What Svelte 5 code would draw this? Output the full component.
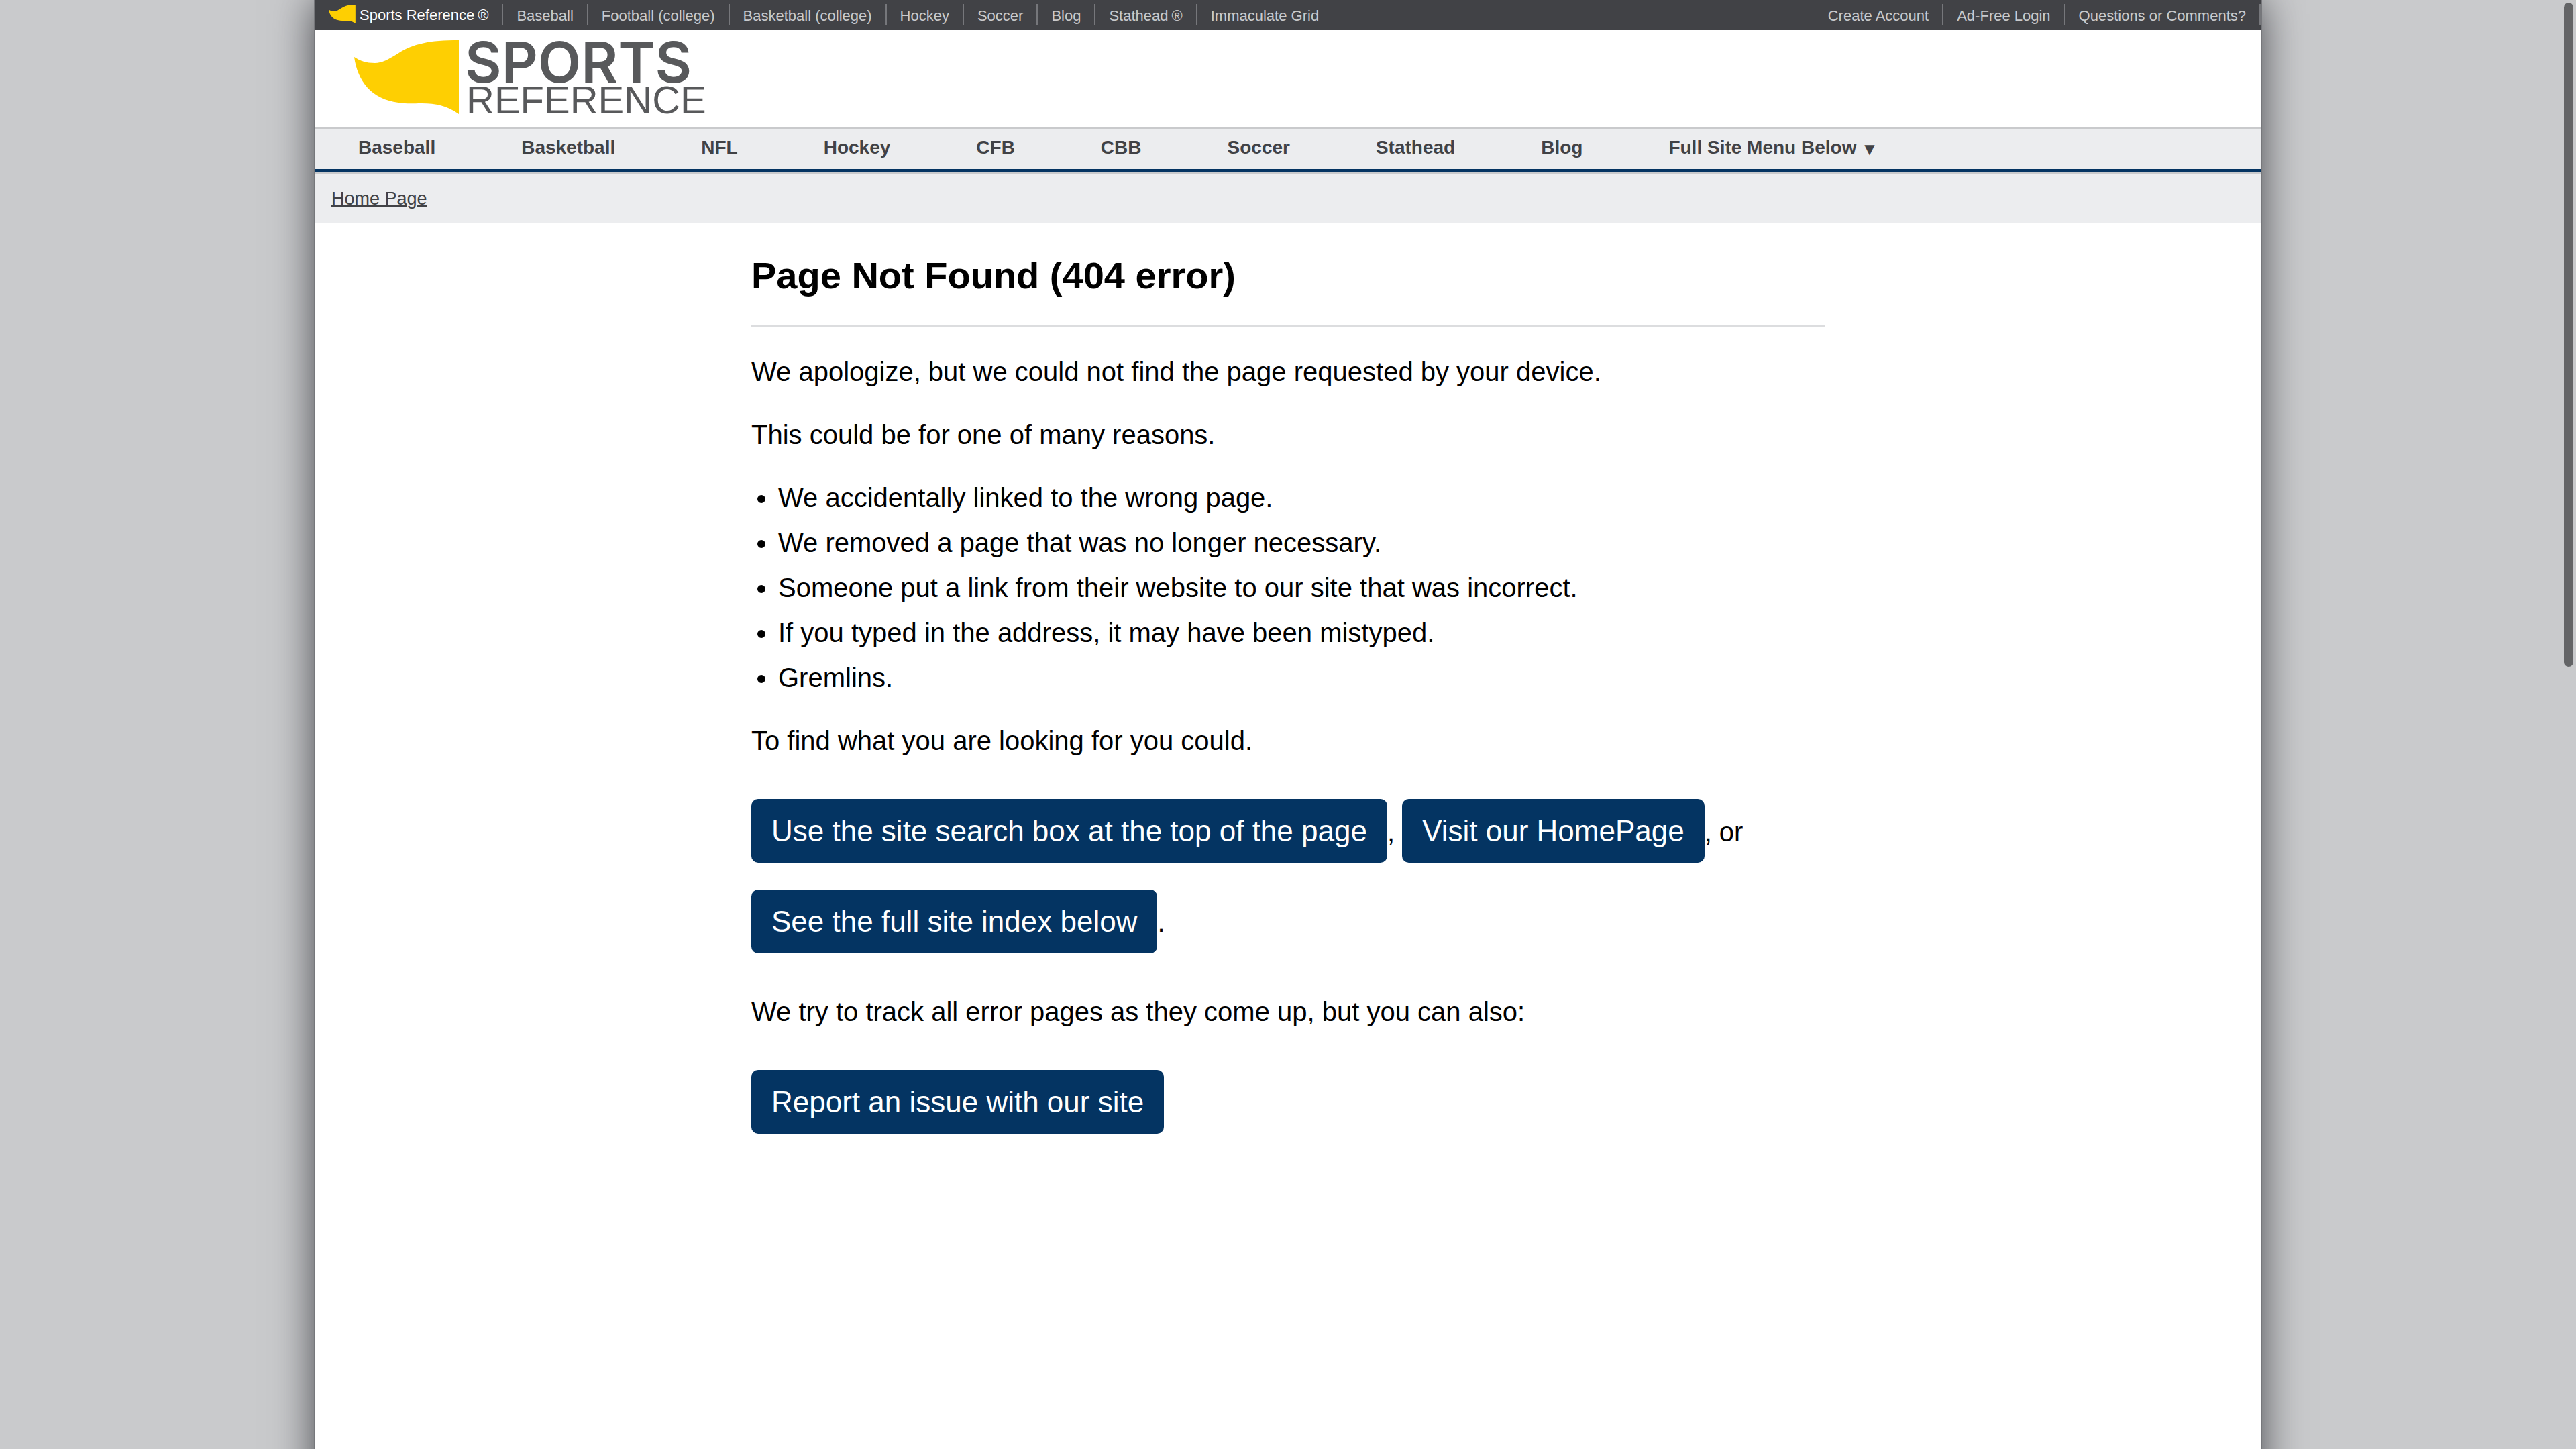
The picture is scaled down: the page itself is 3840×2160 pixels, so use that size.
<script>
  const network = [
    { label: 'Baseball' },
    { label: 'Football (college)' },
    { label: 'Basketball (college)' },
    { label: 'Hockey' },
    { label: 'Soccer' },
    { label: 'Blog' },
    { label: 'Stathead', mark: true },
    { label: 'Immaculate Grid' },
  ];
  const account = ['Create Account', 'Ad-Free Login', 'Questions or Comments?'];
  const sections = ['Baseball', 'Basketball', 'NFL', 'Hockey', 'CFB', 'CBB', 'Soccer', 'Stathead', 'Blog'];
  const reasons = [
    'We accidentally linked to the wrong page.',
    'We removed a page that was no longer necessary.',
    'Someone put a link from their website to our site that was incorrect.',
    'If you typed in the address, it may have been mistyped.',
    'Gremlins.',
  ];
</script>

<div class="viewport">
  <div class="page">
    <nav class="topbar" aria-label="Network">
      <ul>
        <li class="home">
          <a href="#home">
            <svg class="flag-small" viewBox="0 0 156 110" aria-hidden="true">
              <path d="M0 29C9 35 18 38 31 38C69 37 71 0 156 0V110C137 97 122 94 101 94C86 94 81 95 66 93C26 88 5 65 0 29Z" />
            </svg>
            <span>Sports Reference<span class="mark">®</span></span>
          </a>
        </li>
        {#each network as item}
          <li><a href="#network">{item.label}{#if item.mark}<span class="mark">®</span>{/if}</a></li>
        {/each}
      </ul>
      <ul class="account">
        {#each account as item}
          <li><a href="#account">{item}</a></li>
        {/each}
      </ul>
    </nav>

    <header>
      <a class="logo" href="#home" aria-label="Sports Reference">
        <svg viewBox="0 0 560 110">
          <path d="M0 25C9 31 18 34 31 34C41 34 50 29 65 20C88 5 112 0 156 0V110C137 97 122 94 101 94C86 94 81 95 66 93C26 88 5 61 0 25Z" />
          <text class="sports" x="165" y="63">SPORTS</text>
          <text class="reference" x="167" y="109">REFERENCE</text>
        </svg>
      </a>
    </header>

    <nav class="sections" aria-label="Sites">
      <ul>
        {#each sections as item}
          <li><a href="#section">{item}</a></li>
        {/each}
        <li><a href="#footer">Full Site Menu Below <span class="arrow">▼</span></a></li>
      </ul>
    </nav>

    <div class="crumbs"><a href="#home">Home Page</a></div>

    <main>
      <h1>Page Not Found (404 error)</h1>
      <p>We apologize, but we could not find the page requested by your device.</p>
      <p>This could be for one of many reasons.</p>
      <ul>
        {#each reasons as reason}
          <li>{reason}</li>
        {/each}
      </ul>
      <p>To find what you are looking for you could.</p>
      <p>
        <a class="button" href="#search">Use the site search box at the top of the page</a>,
        <a class="button" href="#home">Visit our HomePage</a>, or
        <a class="button" href="#footer">See the full site index below</a>.
      </p>
      <p>We try to track all error pages as they come up, but you can also:</p>
      <p><a class="button" href="#report">Report an issue with our site</a></p>
    </main>
  </div>
  <div class="scroll-thumb"></div>
</div>

<style>
  :global(body) {
    margin: 0;
    background: #c9cacc;
    font-family: 'Liberation Sans', Arial, sans-serif;
  }

  .viewport {
    height: 100vh;
    overflow-x: hidden;
    overflow-y: auto;
    scrollbar-width: none;
  }

  .page {
    box-sizing: border-box;
    max-width: 2900px;
    min-height: calc(100vh + 120px);
    margin: 0 auto;
    background: #fff;
    box-shadow: 0 0 0 2px #76777b, 0 0 60px #414247;
  }

  ul {
    margin: 0;
    padding: 0;
  }

  a {
    color: inherit;
    text-decoration: none;
  }

  .topbar {
    display: flex;
    justify-content: space-between;
    padding: 6px 0;
    background: #414246;
    color: #c9cacc;
    font-size: 22px;
  }

  .topbar ul {
    display: flex;
    list-style: none;
  }

  .topbar li {
    border-right: 2px solid #76777b;
  }

  .topbar ul:not(.account) li:last-child {
    border-right: 0;
  }

  .topbar a {
    display: flex;
    padding: 4px 20px 0;
    line-height: 28px;
    white-space: nowrap;
  }

  .topbar .home {
    color: #fff;
  }

  .topbar .home a {
    padding-top: 1px;
    line-height: 31px;
  }

  .topbar .home span {
    padding-top: 1px;
    line-height: 30px;
  }

  .mark {
    margin-left: 5px;
  }

  .flag-small {
    width: 40px;
    height: 28px;
    margin-right: 6px;
    fill: #fecf02;
  }

  header {
    padding: 16px 58px 20px;
  }

  .logo {
    display: block;
    width: 560px;
  }

  .logo svg {
    display: block;
    width: 100%;
    overflow: visible;
  }

  .logo path {
    fill: #fecf02;
  }

  .logo text {
    fill: #58595b;
  }

  .sports {
    font-family: Inter, sans-serif;
    font-size: 84px;
    font-weight: 600;
  }

  .reference {
    font-size: 58px;
  }

  .sections {
    border-top: 2px solid #c9cacc;
    border-bottom: 4px solid #043462;
    background: #ecedef;
    color: #414246;
    font-size: 28px;
    font-weight: 700;
  }

  .sections ul {
    display: flex;
    flex-wrap: wrap;
    list-style: none;
  }

  .sections a {
    display: block;
    padding: 0 64px 4px;
    line-height: 56px;
  }

  .arrow {
    margin-left: 4px;
    font-family: 'DejaVu Sans', sans-serif;
    font-size: 20px;
    font-weight: 400;
    line-height: 1;
  }

  .crumbs {
    padding: 16px 24px;
    border-top: 4px solid #c9cacc;
    background: #ecedef;
    color: #414246;
    font-size: 27px;
    line-height: 40px;
  }

  .crumbs a {
    text-decoration: underline;
    text-decoration-thickness: 2px;
  }

  main {
    max-width: 1600px;
    margin: 0 auto;
    padding: 45px 0;
    color: #000;
    font-size: 40px;
    line-height: 54px;
  }

  h1 {
    margin: 0;
    padding-bottom: 40px;
    border-bottom: 2px solid #dcdddf;
    font-size: 56px;
    line-height: 68px;
  }

  p,
  main ul {
    margin: 40px 0;
  }

  main ul {
    padding-left: 40px;
  }

  main li + li {
    margin-top: 13px;
  }

  .button {
    display: inline-block;
    margin: 20px 0;
    padding: 18px 30px;
    border-radius: 10px;
    background: #043462;
    color: #fff;
    font-size: 44px;
    line-height: 59px;
  }

  .scroll-thumb {
    position: fixed;
    top: 4px;
    right: 4px;
    width: 14px;
    height: 990px;
    border-radius: 7px;
    background: #636466;
  }
</style>
